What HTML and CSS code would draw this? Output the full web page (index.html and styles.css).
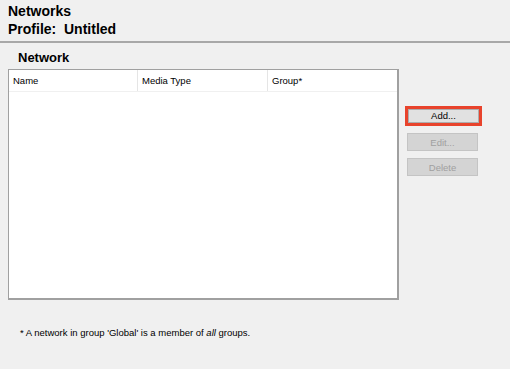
FILE: index.html
```html
<!DOCTYPE html>
<html lang="en">
<head>
    <meta charset="UTF-8">
    <meta name="viewport" content="width=device-width, initial-scale=1.0">
    <title>Networks</title>
    <link rel="stylesheet" href="styles.css">
</head>
<body>
    <div class="page-head">
        <h1>Networks</h1>
        <p class="profile">Profile:&nbsp; Untitled</p>
    </div>

    <div class="section">
        <h2>Network</h2>
        <div class="row">
            <div class="grid">
                <div class="grid-head">
                    <div class="col col-name">Name</div>
                    <div class="col col-media">Media Type</div>
                    <div class="col col-group">Group*</div>
                </div>
            </div>
            <div class="buttons">
                <div class="focus-ring"><button class="btn">Add...</button></div>
                <button class="btn" disabled>Edit...</button>
                <button class="btn" disabled>Delete</button>
            </div>
        </div>
        <p class="note">* A network in group 'Global' is a member of <i>all</i> groups.</p>
    </div>
</body>
</html>
```

FILE: styles.css
```css
body { margin: 0; background: #f0f0f0; font-family: "Liberation Sans", Arial, sans-serif; color: #000; }
.page-head { padding: 2px 8px 3px; border-bottom: 2px solid #a8a8a8; }
.page-head h1 { margin: 0; font-size: 14px; line-height: 18px; }
.profile { margin: 0; font-size: 14px; line-height: 18px; font-weight: bold; }
.section { padding: 0 8px; }
.section h2 { margin: 6px 0 0 10px; font-size: 13px; line-height: 17px; }
.row { display: flex; margin-top: 3px; }
.grid { width: 388px; height: 228px; background: #fff; border: 1px solid #a0a0a0; border-right-width: 2px; border-bottom-width: 2px; }
.grid-head { display: flex; height: 21px; border-bottom: 1px solid #f0f0f0; font-size: 9.5px; }
.col { padding: 0 4px; line-height: 21px; border-right: 1px solid #e5e5e5; box-sizing: border-box; }
.col-name { width: 129px; }
.col-media { width: 130px; }
.col-group { flex: 1; border-right: none; }
.buttons { display: flex; flex-direction: column; align-items: flex-start; margin-left: 6px; padding-top: 37px; gap: 7px; }
.focus-ring { border: 3px solid #e8432c; }
.btn { box-sizing: border-box; width: 71px; height: 18px; margin: 0 0 0 2px; padding: 0; font-family: inherit; font-size: 9.5px; background: #e1e1e1; border: 1px solid #adadad; color: #000; }
.focus-ring .btn { display: block; margin: 0; width: 71px; height: 14px; line-height: 12px; }
.btn:disabled { background: #d4d4d4; border-color: #c4c4c4; color: #a0a0a0; }
.note { margin: 27px 0 0 12px; font-size: 9.5px; }
```
